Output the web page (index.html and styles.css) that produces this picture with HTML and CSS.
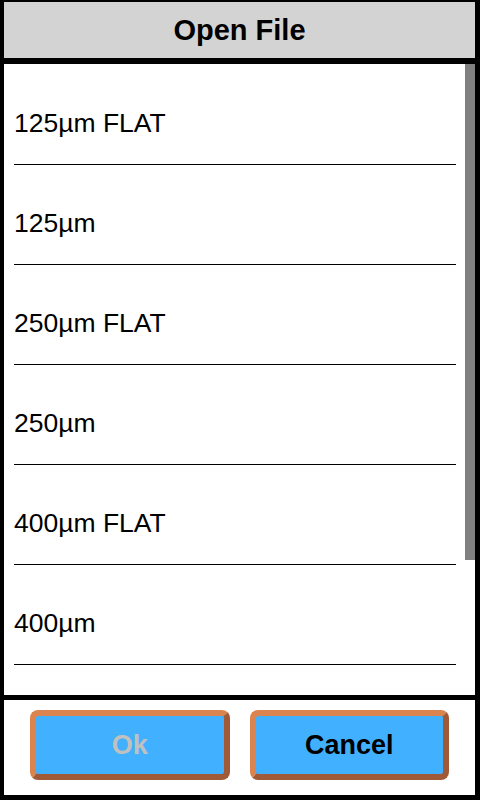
FILE: index.html
```html
<!DOCTYPE html>
<html>
<head>
<meta charset="utf-8">
<link rel="stylesheet" href="styles.css">
</head>
<body>
<div class="dialog">
  <div class="header">Open File</div>
  <div class="list">
    <div class="rows">
      <div class="row">125µm FLAT</div>
      <div class="row">125µm</div>
      <div class="row">250µm FLAT</div>
      <div class="row">250µm</div>
      <div class="row">400µm FLAT</div>
      <div class="row">400µm</div>
    </div>
    <div class="scrollbar"><div class="thumb"></div></div>
  </div>
  <div class="footer">
    <button class="btn btn-disabled">Ok</button>
    <button class="btn">Cancel</button>
  </div>
</div>
</body>
</html>
```
FILE: styles.css
```css
html, body {
  margin: 0;
  padding: 0;
  background: #000;
}
body {
  width: 480px;
  height: 800px;
  overflow: hidden;
  font-family: "Liberation Sans", Arial, sans-serif;
}
.dialog {
  box-sizing: border-box;
  width: 480px;
  height: 800px;
  padding: 2px 5px 5px 4px;
  display: flex;
  flex-direction: column;
}
.header {
  height: 56px;
  flex: none;
  background: #d3d3d3;
  display: flex;
  align-items: center;
  justify-content: center;
  box-sizing: border-box;
  padding-top: 1px;
  font-size: 29px;
  font-weight: bold;
  color: #000;
}
.list {
  margin-top: 6px;
  height: 631px;
  flex: none;
  background: #fff;
  display: flex;
  overflow: hidden;
}
.rows {
  flex: 1;
  min-width: 0;
  padding-top: 1px;
  overflow: hidden;
}
.scrollbar {
  width: 10px;
  flex: none;
  background: #fff;
}
.thumb {
  height: 496px;
  background: #808080;
}
.row {
  margin: 0 9px 0 10px;
  height: 100px;
  box-sizing: border-box;
  padding-top: 43px;
  line-height: 30px;
  font-size: 26.5px;
  color: #000;
  border-bottom: 1px solid #000;
  white-space: nowrap;
}
.footer {
  margin-top: 5px;
  flex: 1;
  background: #fff;
  box-sizing: border-box;
  padding: 10px 26px 15px 26px;
  display: flex;
  gap: 20px;
}
.btn {
  width: 200px;
  height: 70px;
  box-sizing: border-box;
  border: 6px solid;
  border-color: #dc844f #a05a38 #a05a38 #dc844f;
  border-radius: 8px;
  background: #40b0ff;
  font-family: "Liberation Sans", Arial, sans-serif;
  font-size: 27px;
  font-weight: bold;
  color: #000;
  padding: 0;
  display: flex;
  align-items: center;
  justify-content: center;
}
.btn-disabled {
  color: #c0c0c0;
}
```
